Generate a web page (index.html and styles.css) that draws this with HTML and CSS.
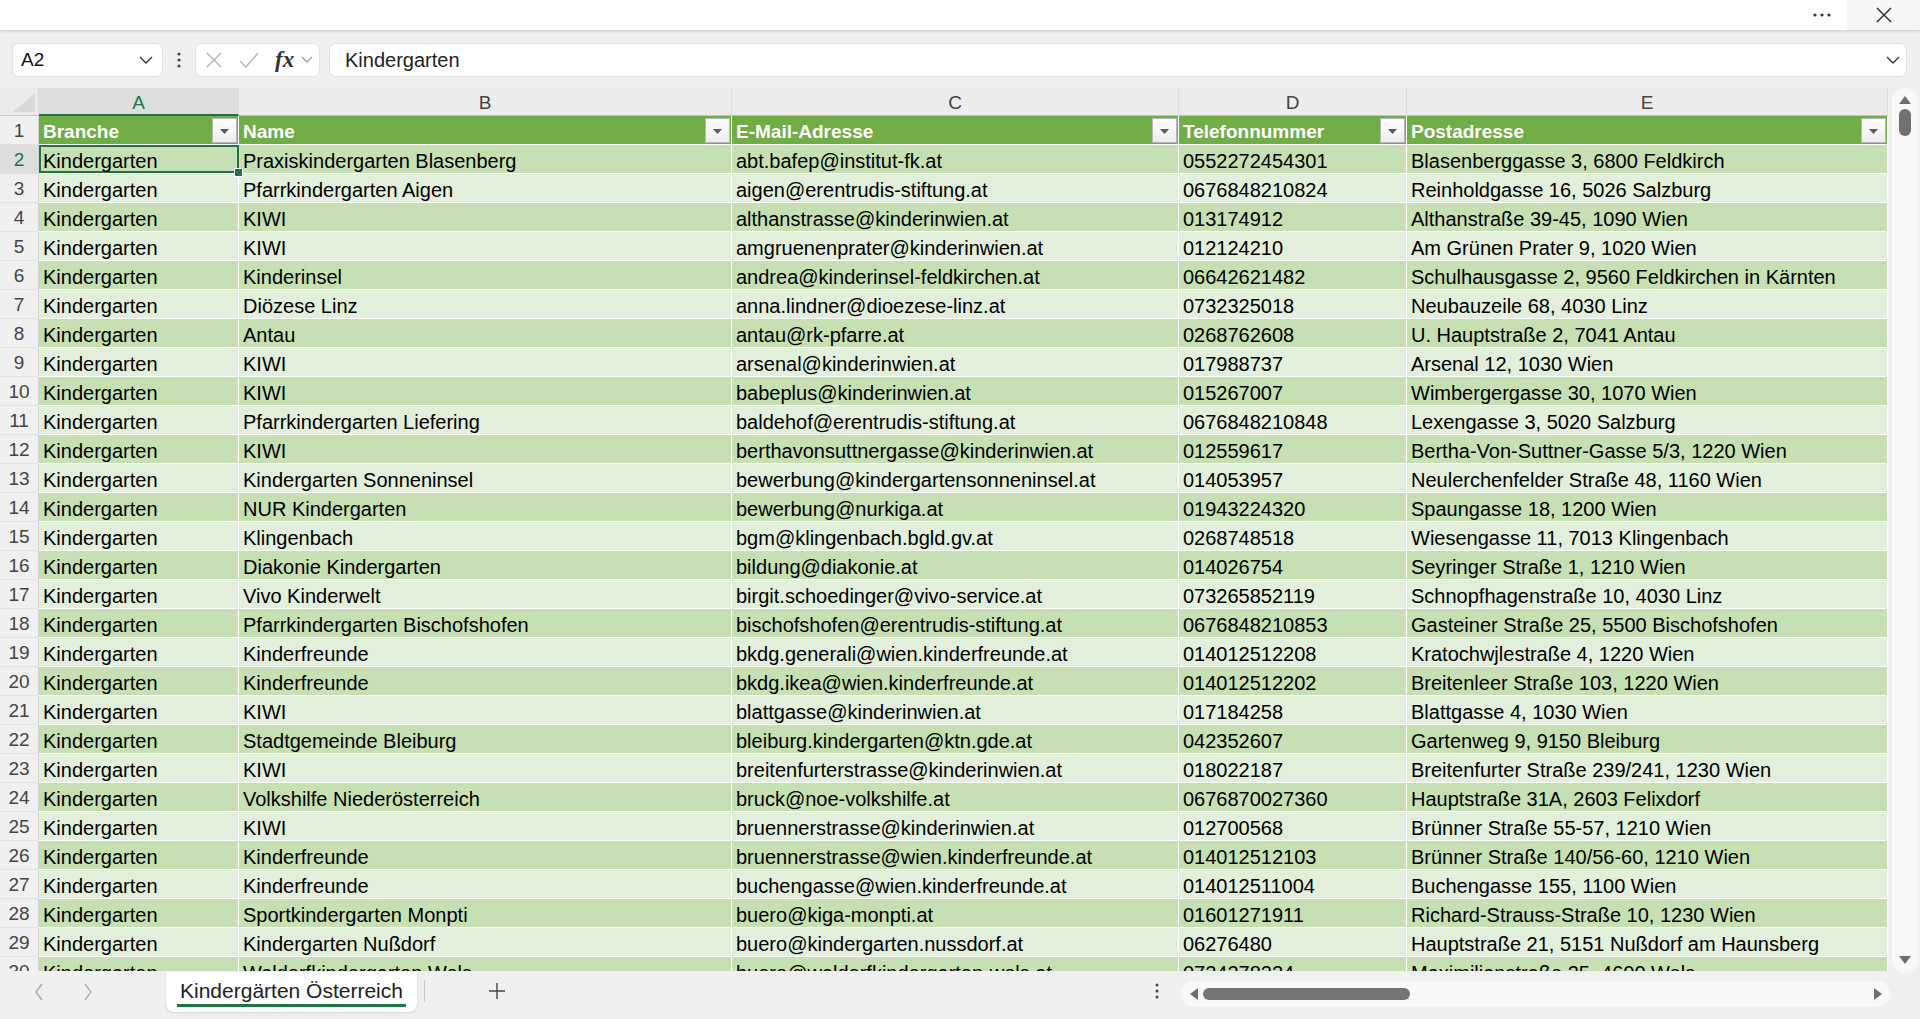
FILE: index.html
```html
<!DOCTYPE html>
<html lang="de">
<head>
    <meta charset="UTF-8">
    <title>Kindergärten Österreich</title>
    <link rel="stylesheet" href="styles.css">
</head>
<body>

<!-- Titelleiste -->
<div class="titlebar">
    <div class="title-btn">
        <svg width="20" height="6" viewBox="0 0 20 6"><circle cx="3" cy="3" r="1.6" fill="#333"/><circle cx="10" cy="3" r="1.6" fill="#333"/><circle cx="17" cy="3" r="1.6" fill="#333"/></svg>
    </div>
    <div class="title-btn close">
        <svg width="16" height="16" viewBox="0 0 16 16"><path d="M1 1L15 15M15 1L1 15" stroke="#333" stroke-width="1.5" fill="none"/></svg>
    </div>
</div>

<!-- Bearbeitungsleiste -->
<div class="formulabar">
    <div class="namebox">
        <span>A2</span>
        <svg width="14" height="8" viewBox="0 0 14 8"><polyline points="1,1 7,7 13,1" stroke="#333" stroke-width="1.4" fill="none"/></svg>
    </div>
    <div class="vdots">
        <svg width="4" height="16" viewBox="0 0 4 16"><circle cx="2" cy="2" r="1.6" fill="#444"/><circle cx="2" cy="8" r="1.6" fill="#444"/><circle cx="2" cy="14" r="1.6" fill="#444"/></svg>
    </div>
    <div class="fxbox">
        <svg class="fx-cancel" width="18" height="18" viewBox="0 0 18 18"><path d="M2 2L16 16M16 2L2 16" stroke="#b4b4b4" stroke-width="1.4" fill="none"/></svg>
        <svg class="fx-ok" width="22" height="18" viewBox="0 0 22 18"><polyline points="2,10 8,16 20,2" stroke="#b4b4b4" stroke-width="1.4" fill="none"/></svg>
        <i class="fx">fx</i>
        <svg width="12" height="8" viewBox="0 0 12 8"><polyline points="1,1 6,6 11,1" stroke="#9a9a9a" stroke-width="1.3" fill="none"/></svg>
    </div>
    <div class="formula-input">
        <span>Kindergarten</span>
        <svg width="14" height="8" viewBox="0 0 14 8"><polyline points="1,1 7,7 13,1" stroke="#333" stroke-width="1.3" fill="none"/></svg>
    </div>
</div>

<!-- Tabellenblatt -->
<div class="sheet">
    <div class="grid-wrap">
        <div class="grid" id="grid"></div>
    </div>
    <div class="vscroll">
        <svg width="14" height="10" viewBox="0 0 14 10"><polygon points="7,1 13,9 1,9" fill="#6e6e6e"/></svg>
        <div class="vthumb"></div>
        <div class="spacer"></div>
        <svg width="14" height="10" viewBox="0 0 14 10"><polygon points="1,1 13,1 7,9" fill="#6e6e6e"/></svg>
    </div>
</div>

<!-- Blattregister und Bildlaufleiste -->
<div class="bottombar">
    <div class="nav">
        <svg width="10" height="18" viewBox="0 0 10 18"><polyline points="8,1 2,9 8,17" stroke="#a8a8a8" stroke-width="1.3" fill="none"/></svg>
        <svg width="10" height="18" viewBox="0 0 10 18"><polyline points="2,1 8,9 2,17" stroke="#a8a8a8" stroke-width="1.3" fill="none"/></svg>
    </div>
    <div class="tab"><span>Kindergärten Österreich</span></div>
    <div class="tab-sep"></div>
    <div class="addsheet">
        <svg width="18" height="18" viewBox="0 0 18 18"><path d="M9 1V17M1 9H17" stroke="#444" stroke-width="1.4" fill="none"/></svg>
    </div>
    <div class="spacer"></div>
    <div class="vdots">
        <svg width="4" height="16" viewBox="0 0 4 16"><circle cx="2" cy="2" r="1.5" fill="#444"/><circle cx="2" cy="8" r="1.5" fill="#444"/><circle cx="2" cy="14" r="1.5" fill="#444"/></svg>
    </div>
    <div class="hscroll">
        <svg width="10" height="14" viewBox="0 0 10 14"><polygon points="9,1 9,13 1,7" fill="#6e6e6e"/></svg>
        <div class="hthumb"></div>
        <div class="spacer"></div>
        <svg width="10" height="14" viewBox="0 0 10 14"><polygon points="1,1 9,7 1,13" fill="#6e6e6e"/></svg>
    </div>
</div>

<script>
// Spalten der Tabelle
const headers = ["Branche", "Name", "E-Mail-Adresse", "Telefonnummer", "Postadresse"];

// Einträge (Branche ist überall "Kindergarten")
const rows = [
    ["Praxiskindergarten Blasenberg", "abt.bafep@institut-fk.at", "0552272454301", "Blasenberggasse 3, 6800 Feldkirch"],
    ["Pfarrkindergarten Aigen", "aigen@erentrudis-stiftung.at", "0676848210824", "Reinholdgasse 16, 5026 Salzburg"],
    ["KIWI", "althanstrasse@kinderinwien.at", "013174912", "Althanstraße 39-45, 1090 Wien"],
    ["KIWI", "amgruenenprater@kinderinwien.at", "012124210", "Am Grünen Prater 9, 1020 Wien"],
    ["Kinderinsel", "andrea@kinderinsel-feldkirchen.at", "06642621482", "Schulhausgasse 2, 9560 Feldkirchen in Kärnten"],
    ["Diözese Linz", "anna.lindner@dioezese-linz.at", "0732325018", "Neubauzeile 68, 4030 Linz"],
    ["Antau", "antau@rk-pfarre.at", "0268762608", "U. Hauptstraße 2, 7041 Antau"],
    ["KIWI", "arsenal@kinderinwien.at", "017988737", "Arsenal 12, 1030 Wien"],
    ["KIWI", "babeplus@kinderinwien.at", "015267007", "Wimbergergasse 30, 1070 Wien"],
    ["Pfarrkindergarten Liefering", "baldehof@erentrudis-stiftung.at", "0676848210848", "Lexengasse 3, 5020 Salzburg"],
    ["KIWI", "berthavonsuttnergasse@kinderinwien.at", "012559617", "Bertha-Von-Suttner-Gasse 5/3, 1220 Wien"],
    ["Kindergarten Sonneninsel", "bewerbung@kindergartensonneninsel.at", "014053957", "Neulerchenfelder Straße 48, 1160 Wien"],
    ["NUR Kindergarten", "bewerbung@nurkiga.at", "01943224320", "Spaungasse 18, 1200 Wien"],
    ["Klingenbach", "bgm@klingenbach.bgld.gv.at", "0268748518", "Wiesengasse 11, 7013 Klingenbach"],
    ["Diakonie Kindergarten", "bildung@diakonie.at", "014026754", "Seyringer Straße 1, 1210 Wien"],
    ["Vivo Kinderwelt", "birgit.schoedinger@vivo-service.at", "073265852119", "Schnopfhagenstraße 10, 4030 Linz"],
    ["Pfarrkindergarten Bischofshofen", "bischofshofen@erentrudis-stiftung.at", "0676848210853", "Gasteiner Straße 25, 5500 Bischofshofen"],
    ["Kinderfreunde", "bkdg.generali@wien.kinderfreunde.at", "014012512208", "Kratochwjlestraße 4, 1220 Wien"],
    ["Kinderfreunde", "bkdg.ikea@wien.kinderfreunde.at", "014012512202", "Breitenleer Straße 103, 1220 Wien"],
    ["KIWI", "blattgasse@kinderinwien.at", "017184258", "Blattgasse 4, 1030 Wien"],
    ["Stadtgemeinde Bleiburg", "bleiburg.kindergarten@ktn.gde.at", "042352607", "Gartenweg 9, 9150 Bleiburg"],
    ["KIWI", "breitenfurterstrasse@kinderinwien.at", "018022187", "Breitenfurter Straße 239/241, 1230 Wien"],
    ["Volkshilfe Niederösterreich", "bruck@noe-volkshilfe.at", "0676870027360", "Hauptstraße 31A, 2603 Felixdorf"],
    ["KIWI", "bruennerstrasse@kinderinwien.at", "012700568", "Brünner Straße 55-57, 1210 Wien"],
    ["Kinderfreunde", "bruennerstrasse@wien.kinderfreunde.at", "014012512103", "Brünner Straße 140/56-60, 1210 Wien"],
    ["Kinderfreunde", "buchengasse@wien.kinderfreunde.at", "014012511004", "Buchengasse 155, 1100 Wien"],
    ["Sportkindergarten Monpti", "buero@kiga-monpti.at", "01601271911", "Richard-Strauss-Straße 10, 1230 Wien"],
    ["Kindergarten Nußdorf", "buero@kindergarten.nussdorf.at", "06276480", "Hauptstraße 21, 5151 Nußdorf am Haunsberg"],
    ["Waldorfkindergarten Wels", "buero@waldorfkindergarten-wels.at", "0724278224", "Maximilianstraße 25, 4600 Wels"]
];

const filterBtn = '<span class="filter"><svg width="9" height="5" viewBox="0 0 9 5"><polygon points="0,0 9,0 4.5,5" fill="#5a5a5a"/></svg></span>';

let html = '<div class="corner"><svg width="22" height="19" viewBox="0 0 22 19"><polygon points="22,0 22,19 0,19" fill="#dadada"/></svg></div>';

// Spaltenköpfe A-E
["A", "B", "C", "D", "E"].forEach((letter, i) => {
    html += `<div class="colhead${i === 0 ? ' active' : ''}">${letter}</div>`;
});

// Zeile 1: Überschriften der Tabelle
html += '<div class="rowhead">1</div>';
headers.forEach(h => {
    html += `<div class="cell head"><span>${h}</span>${filterBtn}</div>`;
});

// Datenzeilen
rows.forEach((r, i) => {
    const rowNum = i + 2;
    const band = i % 2 === 0 ? 'band1' : 'band2';
    html += `<div class="rowhead${rowNum === 2 ? ' active' : ''}">${rowNum}</div>`;
    html += `<div class="cell ${band}${rowNum === 2 ? ' selected' : ''}">Kindergarten</div>`;
    r.forEach(v => {
        html += `<div class="cell ${band}">${v}</div>`;
    });
});

document.getElementById("grid").innerHTML = html;
</script>

</body>
</html>
```

FILE: styles.css
```css
body {
    margin: 0;
    background-color: #f0f0f0;
    font-family: "Liberation Sans", Arial, sans-serif;
    color: #000;
    overflow: hidden;
}

/* Titelleiste */
.titlebar {
    height: 30px;
    background-color: #fff;
    box-shadow: 0 1px 3px rgba(0, 0, 0, 0.18);
    display: flex;
    justify-content: flex-end;
    position: relative;
    z-index: 2;
}
.title-btn {
    width: 50px;
    display: flex;
    align-items: center;
    justify-content: center;
}
.title-btn.close {
    width: 73px;
    background-color: #f6f6f6;
}

/* Bearbeitungsleiste */
.formulabar {
    height: 34px;
    margin: 13px 0 11px;
    padding: 0 13px 0 12px;
    display: flex;
    align-items: stretch;
}
.namebox {
    width: 151px;
    box-sizing: border-box;
    background-color: #fff;
    border: 1px solid #e2e2e2;
    border-radius: 7px;
    display: flex;
    align-items: center;
    justify-content: space-between;
    padding: 0 9px 0 8px;
    font-size: 19px;
    color: #111;
}
.vdots {
    width: 32px;
    display: flex;
    align-items: center;
    justify-content: center;
}
.fxbox {
    width: 125px;
    box-sizing: border-box;
    background-color: #fff;
    border: 1px solid #e2e2e2;
    border-radius: 7px;
    display: flex;
    align-items: center;
    padding: 0 0 0 9px;
}
.fx-ok {
    margin-left: 15px;
}
.fx {
    font-family: "Liberation Serif", serif;
    font-size: 23px;
    font-weight: bold;
    color: #333;
    margin-left: 15px;
    margin-right: 7px;
}
.formula-input {
    flex: 1;
    margin-left: 9px;
    box-sizing: border-box;
    background-color: #fff;
    border: 1px solid #e2e2e2;
    border-radius: 7px;
    display: flex;
    align-items: center;
    justify-content: space-between;
    padding: 0 6px 0 15px;
    font-size: 20px;
    color: #222;
}

/* Tabellenblatt */
.sheet {
    height: 883px;
    display: flex;
}
.grid-wrap {
    width: 1888px;
    overflow: hidden;
}
.grid {
    display: grid;
    grid-template-columns: 39px 200px 493px 447px 228px 481px;
    grid-template-rows: 28px;
    grid-auto-rows: 29px;
}
.corner {
    background-color: #ececec;
    border-right: 1px solid #d8d8d8;
    border-bottom: 1px solid #c8c8c8;
    box-sizing: border-box;
    display: flex;
    align-items: flex-end;
    justify-content: flex-end;
    padding: 0 3px 3px 0;
}
.colhead {
    background-color: #ececec;
    border-right: 1px solid #dcdcdc;
    border-bottom: 1px solid #c4c4c4;
    box-sizing: border-box;
    text-align: center;
    font-size: 19px;
    line-height: 28px;
    padding-top: 1px;
    color: #444;
}
.colhead.active {
    background-color: #dedede;
    color: #217346;
    border-bottom: 2px solid #217346;
}
.rowhead {
    background-color: #f0f0f0;
    border-right: 1px solid #d4d4d4;
    border-bottom: 1px solid #e2e2e2;
    box-sizing: border-box;
    text-align: center;
    font-size: 19px;
    line-height: 28px;
    padding-top: 1px;
    color: #444;
}
.rowhead.active {
    background-color: #dedede;
    color: #217346;
}
.cell {
    border-right: 1px solid #fff;
    border-bottom: 1px solid #fff;
    box-sizing: border-box;
    font-size: 20px;
    line-height: 28px;
    padding: 2px 4px 0 4px;
    white-space: nowrap;
    overflow: hidden;
}
.cell.head {
    background-color: #70ad47;
    color: #fff;
    font-weight: bold;
    font-size: 19px;
    padding: 0 1px 0 4px;
    display: flex;
    align-items: center;
    justify-content: space-between;
}
.cell.head span {
    padding-top: 3px;
}
.band1 {
    background-color: #c6e0b4;
}
.band2 {
    background-color: #e2efda;
}

/* aktive Zelle A2 */
.cell.selected {
    position: relative;
    overflow: visible;
    box-shadow: inset 0 0 0 2px #217346;
    border-right: none;
}
.cell.selected::after {
    content: "";
    position: absolute;
    right: -4px;
    bottom: -4px;
    width: 7px;
    height: 7px;
    background-color: #217346;
    border: 1px solid #fff;
    z-index: 1;
}

/* Filter-Schaltfläche */
.filter {
    width: 25px;
    height: 25px;
    box-sizing: border-box;
    border: 1px solid #b8b8b8;
    background: linear-gradient(#ffffff, #ececec);
    display: flex;
    align-items: center;
    justify-content: center;
    flex-shrink: 0;
}

/* senkrechte Bildlaufleiste */
.vscroll {
    width: 26px;
    height: 885px;
    margin-left: 4px;
    background-color: #f8f8f8;
    border-radius: 13px;
    display: flex;
    flex-direction: column;
    align-items: center;
    padding: 7px 0 8px;
    box-sizing: border-box;
}
.vthumb {
    width: 12px;
    height: 27px;
    margin-top: 4px;
    border-radius: 6px;
    background-color: #707070;
}
.spacer {
    flex: 1;
}

/* Blattregister unten */
.bottombar {
    height: 48px;
    display: flex;
    align-items: flex-start;
}
.nav {
    width: 166px;
    height: 40px;
    display: flex;
    align-items: center;
    padding-left: 34px;
    gap: 39px;
    box-sizing: border-box;
    margin-top: 1px;
}
.tab {
    width: 251px;
    height: 40px;
    margin-top: 1px;
    background-color: #fff;
    border-radius: 0 0 8px 8px;
    box-shadow: 0 1px 2px rgba(0, 0, 0, 0.12);
    display: flex;
    justify-content: center;
    box-sizing: border-box;
    padding: 5px 11px 0;
}
.tab span {
    display: block;
    width: 100%;
    text-align: center;
    font-size: 21px;
    color: #222;
    line-height: 27px;
    border-bottom: 3px solid #217346;
    height: 30px;
    box-sizing: border-box;
    white-space: nowrap;
}
.tab-sep {
    width: 1px;
    height: 22px;
    margin: 9px 0 0 7px;
    background-color: #c8c8c8;
}
.addsheet {
    width: 18px;
    margin: 11px 0 0 63px;
}
.bottombar .vdots {
    width: 16px;
    margin-top: 12px;
    margin-right: 16px;
}
.hscroll {
    width: 709px;
    height: 26px;
    margin: 10px 30px 0 0;
    background-color: #f8f8f8;
    border-radius: 13px;
    display: flex;
    align-items: center;
    padding: 0 7px 0 8px;
    box-sizing: border-box;
}
.hthumb {
    width: 207px;
    height: 12px;
    margin-left: 4px;
    border-radius: 6px;
    background-color: #747474;
}
```
